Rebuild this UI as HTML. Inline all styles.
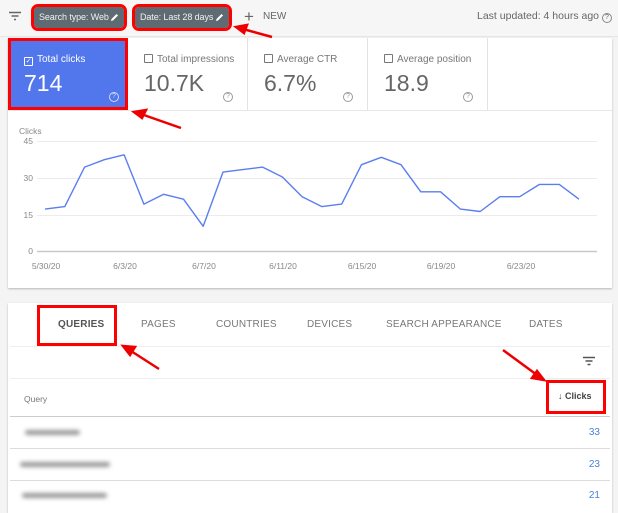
<!DOCTYPE html>
<html><head><meta charset="utf-8"><style>
*{margin:0;padding:0;box-sizing:border-box}
body{width:618px;height:502px;overflow:hidden;background:#f4f4f4;font-family:"Liberation Sans",Arial,sans-serif;position:relative;color:#5f6368}
.abs{position:absolute;white-space:nowrap}
.chip{position:absolute;top:7px;height:21px;background:#5f6b72;border-radius:4px;color:#f0f0f0;font-size:9px;letter-spacing:-0.1px;line-height:21px;padding-left:5px;outline:3px solid #f00;outline-offset:0;white-space:nowrap}
.chip svg{position:absolute;right:5px;top:6px}
.card{position:absolute;background:#fff;box-shadow:0 1px 2px rgba(0,0,0,.25)}
.m{position:absolute;top:38px;height:72px;border-right:1px solid #e3e3e3;background:#fff;white-space:nowrap}
.m .l{position:absolute;left:16px;top:16px;font-size:10px;color:#777}
.m .l i{display:inline-block;width:9px;height:9px;border:1px solid #777;border-radius:1px;margin-right:4px;vertical-align:-1px}
.m .v{position:absolute;left:16px;top:32px;font-size:23px;color:#666}
.m .q{position:absolute;right:14px;bottom:8px;width:10px;height:10px;border:1px solid #999;border-radius:50%;font-size:7px;line-height:8px;text-align:center;color:#999}
.tab{position:absolute;top:319px;font-size:10px;color:#777;letter-spacing:.2px;white-space:nowrap}
.row{position:absolute;left:10px;width:600px;border-top:1px solid #ddd}
.blur{position:absolute;height:5px;background:#999;border-radius:3px;filter:blur(2px)}
.num{position:absolute;right:18px;font-size:10px;color:#4a7fe0}
</style></head><body>
<div class="abs" style="left:0;top:0;width:618px;height:37px;background:#f6f6f6;border-bottom:1px solid #e6e6e6"></div>
<svg class="abs" style="left:9px;top:11px" width="13" height="10"><path d="M0 1.5H12M2.5 5H9.5M5 8.5H7" stroke="#666" stroke-width="1.4"/></svg>
<div class="chip" style="left:34px;width:90px">Search type: Web<svg width="9" height="9"><path d="M1 8 L1.5 6 L6.5 1 L8 2.5 L3 7.5Z" fill="#fff"/></svg></div>
<div class="chip" style="left:135px;width:94px">Date: Last 28 days<svg width="9" height="9"><path d="M1 8 L1.5 6 L6.5 1 L8 2.5 L3 7.5Z" fill="#fff"/></svg></div>
<div class="abs" style="left:244px;top:7px;font-size:17px;color:#666;line-height:19px">+</div>
<div class="abs" style="left:263px;top:11px;font-size:10px;color:#666">NEW</div>
<div class="abs" style="left:477px;top:10px;font-size:10.5px;color:#666">Last updated: 4 hours ago <span style="display:inline-block;width:10px;height:10px;border:1px solid #888;border-radius:50%;font-size:7px;line-height:8px;text-align:center">?</span></div>

<div class="card" style="left:8px;top:38px;width:604px;height:250px"></div>
<div class="m" style="left:8px;width:120px;background:#5277ec;border:3px solid #f00">
  <div class="l" style="color:#fff;left:13px;top:13px"><i style="border-color:#fff;font-style:normal;font-size:7px;line-height:7px;text-align:center">✓</i>Total clicks</div>
  <div class="v" style="color:#fff;left:13px;top:29px">714</div>
  <div class="q" style="border-color:#cfd9fb;color:#cfd9fb;right:6px;bottom:5px">?</div>
</div>
<div class="m" style="left:128px;width:120px"><div class="l"><i></i>Total impressions</div><div class="v">10.7K</div><div class="q">?</div></div>
<div class="m" style="left:248px;width:120px"><div class="l"><i></i>Average CTR</div><div class="v">6.7%</div><div class="q">?</div></div>
<div class="m" style="left:368px;width:120px"><div class="l"><i></i>Average position</div><div class="v">18.9</div><div class="q">?</div></div>
<div class="abs" style="left:8px;top:110px;width:604px;border-top:1px solid #e6e6e6"></div>

<svg class="abs" style="left:0;top:0" width="618" height="300" font-family="Liberation Sans,Arial,sans-serif" font-size="8.5" fill="#888">
<text x="19" y="134">Clicks</text>
<g stroke="#ececec" stroke-width="1"><line x1="37" y1="141.5" x2="597" y2="141.5"/><line x1="37" y1="178.5" x2="597" y2="178.5"/><line x1="37" y1="215.5" x2="597" y2="215.5"/></g>
<line x1="37" y1="251.5" x2="597" y2="251.5" stroke="#c8c8c8" stroke-width="1.5"/>
<g text-anchor="end"><text x="33" y="144">45</text><text x="33" y="181">30</text><text x="33" y="218">15</text><text x="33" y="254">0</text></g>
<g text-anchor="middle"><text x="46" y="269">5/30/20</text><text x="125" y="269">6/3/20</text><text x="204" y="269">6/7/20</text><text x="283" y="269">6/11/20</text><text x="362" y="269">6/15/20</text><text x="441" y="269">6/19/20</text><text x="521" y="269">6/23/20</text></g>
<polyline fill="none" stroke="#5a7ef0" stroke-width="1.4" stroke-linejoin="round" points="45,209.1 64.8,206.6 84.6,167.1 104.3,159.7 124.1,154.8 143.9,204.1 163.7,194.3 183.5,199.2 203.2,226.3 223,172.1 242.8,169.6 262.6,167.1 282.4,177 302.1,196.7 321.9,206.6 341.7,204.1 361.5,164.7 381.3,157.3 401,164.7 420.8,191.8 440.6,191.8 460.4,209.1 480.2,211.5 499.9,196.7 519.7,196.7 539.5,184.4 559.3,184.4 579,199.2"/>
<g stroke="#e00" stroke-width="2.5" fill="#e00">
<line x1="272" y1="37" x2="243" y2="29"/><path d="M236 27 L247 25 L244 33Z"/>
<line x1="181" y1="128" x2="141" y2="114"/><path d="M134 112 L146 110 L142 118Z"/>
</g>
</svg>

<div class="card" style="left:8px;top:303px;width:604px;height:210px"></div>
<div class="tab" style="left:58px;color:#555;font-weight:bold">QUERIES</div>
<div class="tab" style="left:141px">PAGES</div>
<div class="tab" style="left:216px">COUNTRIES</div>
<div class="tab" style="left:307px">DEVICES</div>
<div class="tab" style="left:386px">SEARCH APPEARANCE</div>
<div class="tab" style="left:529px">DATES</div>
<div class="abs" style="left:37px;top:305px;width:80px;height:41px;border:3px solid #f00"></div>
<div class="row" style="top:346px;border-color:#eee"></div>
<svg class="abs" style="left:583px;top:356px" width="12" height="10"><path d="M0 1.5H12M2.5 5H9.5M4.5 8.5H7.5" stroke="#555" stroke-width="1.4"/></svg>
<div class="row" style="top:378px;border-color:#eee"></div>
<div class="abs" style="left:24px;top:394px;font-size:8.5px;color:#777">Query</div>
<div class="abs" style="left:546px;top:380px;width:60px;height:34px;border:3px solid #f00"></div>
<div class="abs" style="left:558px;top:391px;font-size:9px;color:#444;font-weight:bold"><span style="font-weight:normal">↓</span> Clicks</div>
<svg class="abs" style="left:0;top:330px" width="618" height="60"><g stroke="#e00" stroke-width="2.5" fill="#e00"><line x1="159" y1="39" x2="131" y2="21"/><path d="M123 16 L135 17 L130 25Z"/><line x1="503" y1="20" x2="537" y2="45"/><path d="M544 50 L532 48 L537 41Z"/></g></svg>
<div class="row" style="top:416px;border-top:1.5px solid #ccc"></div>
<div class="blur" style="left:25px;top:430px;width:55px"></div>
<div class="num" style="top:427px">33</div>
<div class="row" style="top:448px"></div>
<div class="blur" style="left:20px;top:462px;width:90px"></div>
<div class="num" style="top:459px">23</div>
<div class="row" style="top:480px"></div>
<div class="blur" style="left:22px;top:493px;width:85px"></div>
<div class="num" style="top:490px">21</div>
</body></html>
